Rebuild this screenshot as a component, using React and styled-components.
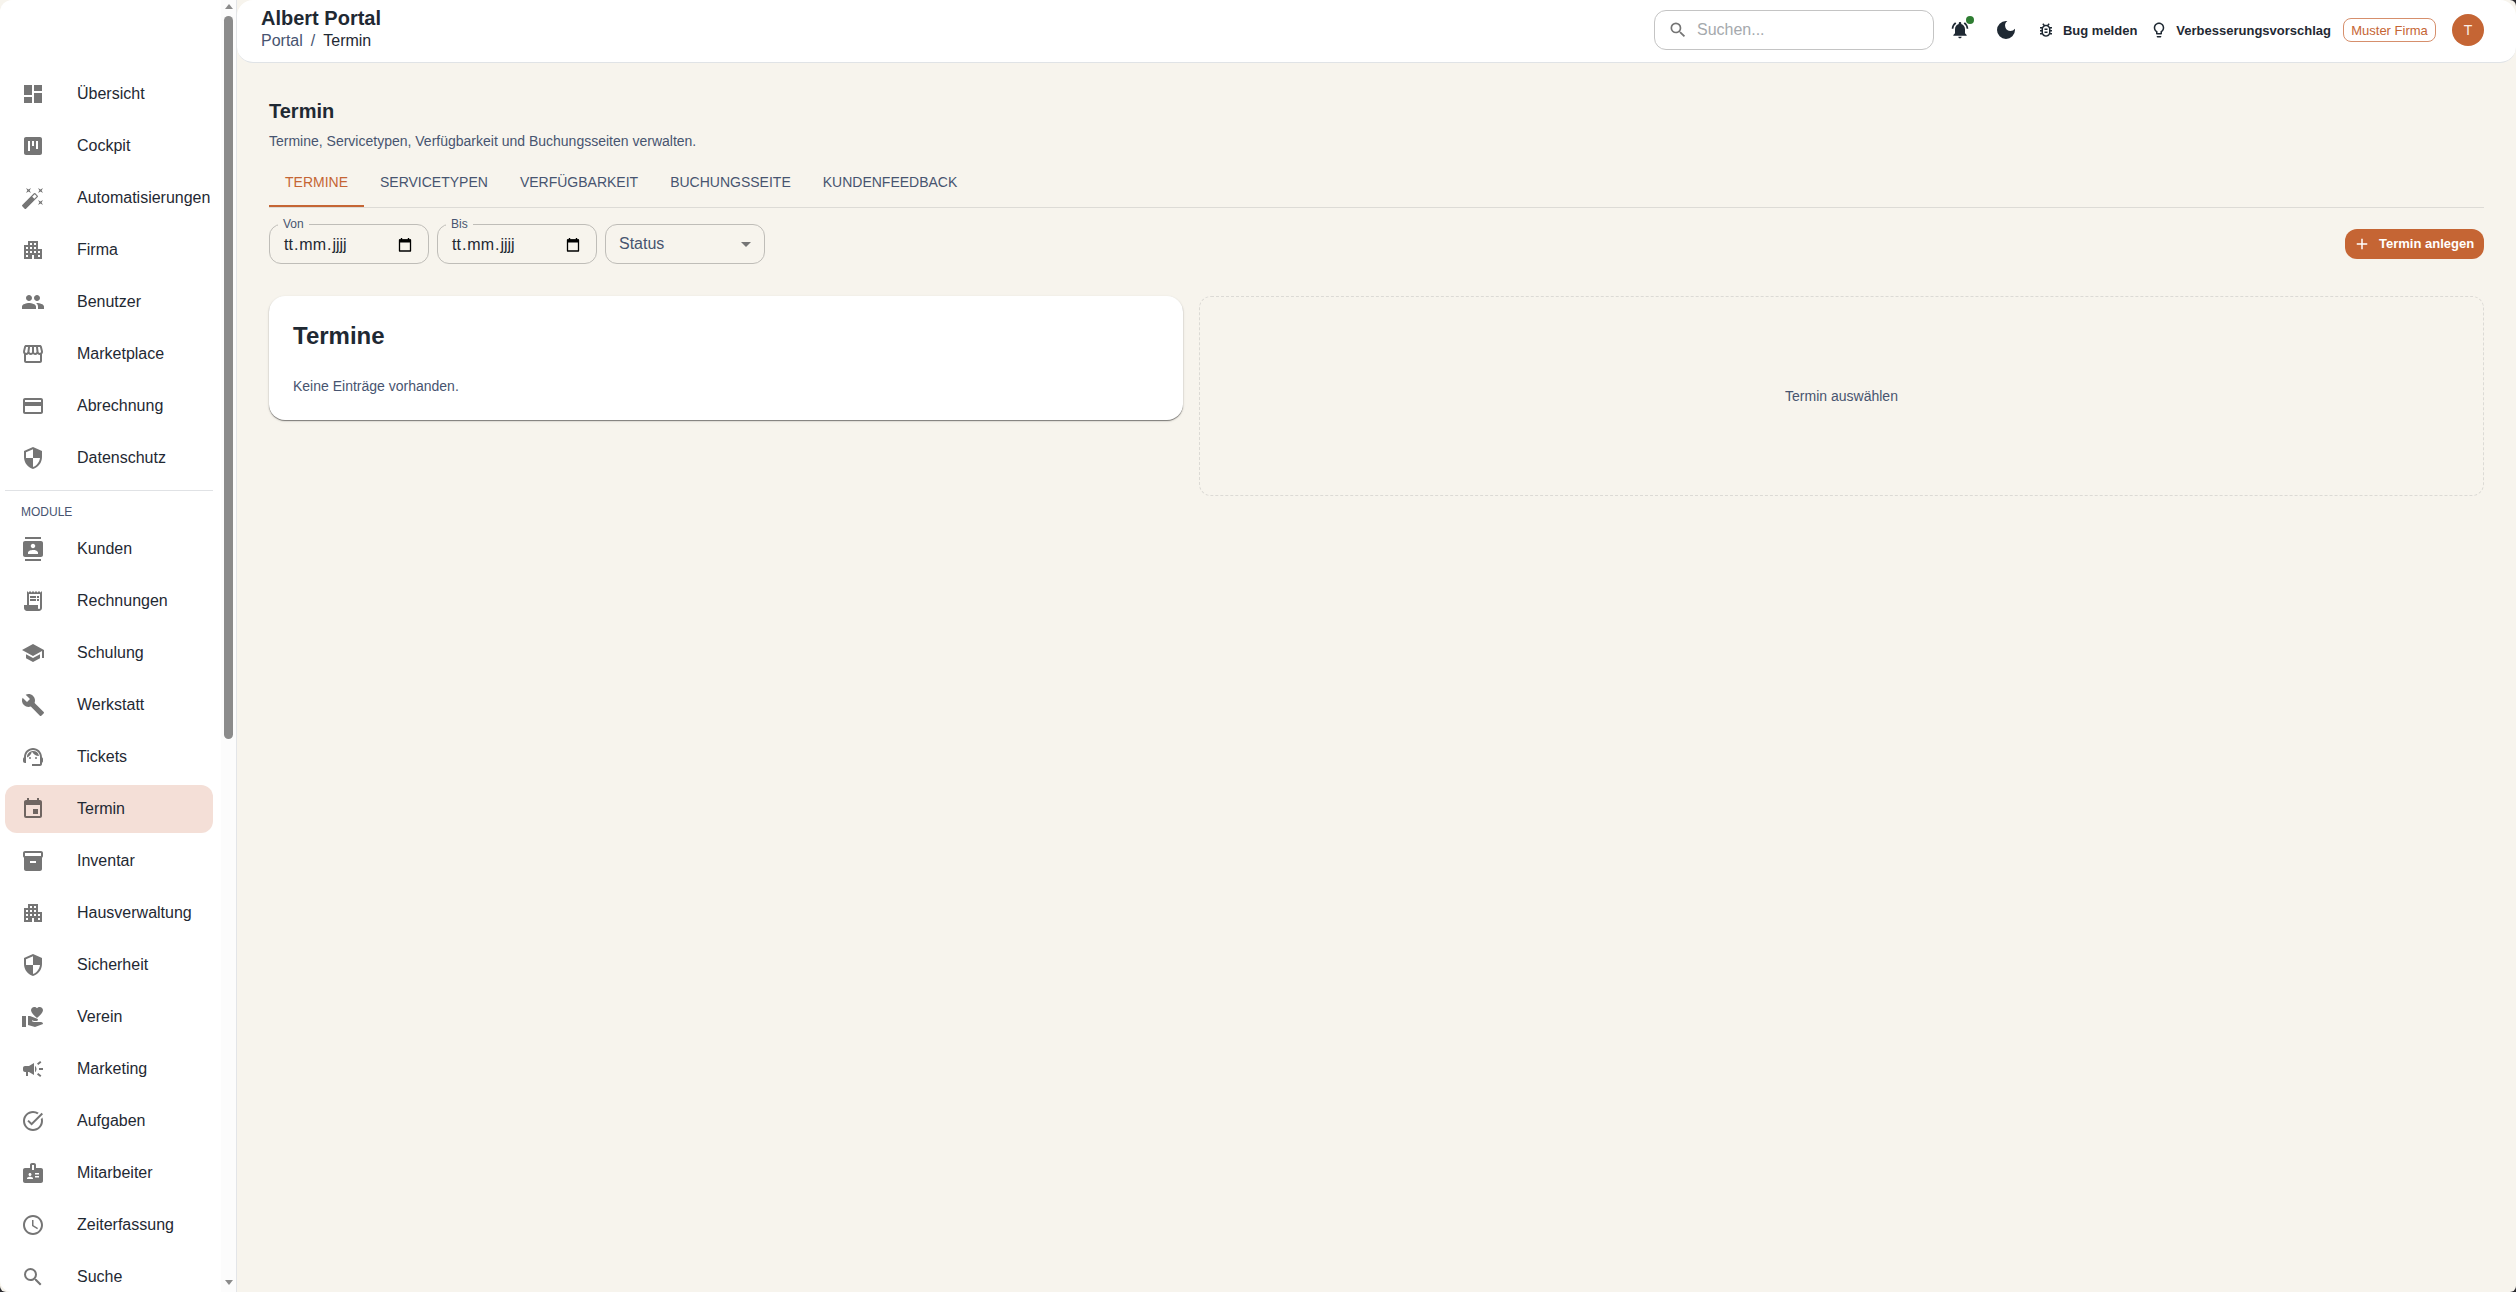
import React from "react";
import styled, { createGlobalStyle } from "styled-components";
import {
  MdDashboard, MdAutoFixHigh, MdPeople, MdSecurity, MdContacts,
  MdReceiptLong, MdSchool, MdBuild, MdSupportAgent, MdEvent, MdInventory2,
  MdVolunteerActivism, MdCampaign, MdTaskAlt, MdBadge, MdSchedule, MdSearch,
  MdNotificationsActive, MdAdd, MdArrowDropDown, MdApartment,
  MdOutlineStorefront, MdCreditCard, MdOutlineBugReport, MdLightbulbOutline,
} from "react-icons/md";

const ink = "#1f2933";
const slate = "#475470";
const accent = "#c56534";
const cream = "#f7f4ed";

const Global = createGlobalStyle`
  * { box-sizing: border-box; }
  html, body { margin: 0; height: 100%; }
  body { background: #2b2b30; overflow: hidden; }
  body, input, button { font-family: "Liberation Sans", Arial, sans-serif; }
`;

const Shell = styled.div`
  display: flex;
  width: 2516px;
  height: 1292px;
  background: ${cream};
  border-radius: 0 6px 6px 6px;
  overflow: hidden;
  color: ${ink};
`;

const Sidebar = styled.aside`
  display: flex;
  flex: none;
  width: 237px;
  height: 100%;
  background: #fff;
  border-right: 1px solid #e3e5e8;
  border-radius: 12px 0 0 12px;
  overflow: hidden;
`;
const NavArea = styled.nav`
  width: 221px;
  padding: 70px 8px 0 5px;
  overflow: hidden;
`;
const NavList = styled.ul`
  display: flex;
  flex-direction: column;
  gap: 4px;
  margin: 0;
  padding: 0;
  list-style: none;
`;
const NavItem = styled.li`
  display: flex;
  flex: none;
  align-items: center;
  height: 48px;
  padding-left: 16px;
  border-radius: 12px;
  background: ${(p) => (p.$active ? "#f4dfd7" : "transparent")};
  font-size: 16px;
  line-height: 24px;
  white-space: nowrap;
  svg {
    flex: none;
    width: 24px;
    height: 24px;
    margin-right: 32px;
    color: ${(p) => (p.$active ? "#6f6561" : "#757575")};
  }
`;
const Divider = styled.hr`
  height: 1px;
  margin: 8px 0 0;
  border: 0;
  background: #e0e2e5;
`;
const NavHeading = styled.div`
  height: 34px;
  padding: 6px 16px 0;
  font-size: 12px;
  line-height: 30px;
  color: ${slate};
`;
const ScrollTrack = styled.div`
  display: flex;
  flex-direction: column;
  align-items: center;
  width: 15px;
  height: 100%;
  background: #fcfcfc;
`;
const ScrollArrow = styled.span`
  width: 0;
  height: 0;
  border: 4.5px solid transparent;
  border-top-width: ${(p) => (p.$up ? "0" : "5px")};
  border-bottom-width: ${(p) => (p.$up ? "5px" : "0")};
  border-${(p) => (p.$up ? "bottom" : "top")}-color: #8b8b8b;
  margin: ${(p) => (p.$up ? "4px 0 7px" : "auto 0 7px")};
`;
const ScrollThumb = styled.div`
  width: 9px;
  height: 723px;
  border-radius: 5px;
  background: #8b8b8b;
`;

const Main = styled.div`
  display: flex;
  flex: 1;
  flex-direction: column;
  min-width: 0;
`;
const TopBar = styled.header`
  display: flex;
  align-items: center;
  height: 63px;
  padding: 0 32px 2px 24px;
  background: #fff;
  border-bottom: 1px solid #e0e3e6;
  border-radius: 16px;
`;
const Brand = styled.div`
  margin-right: auto;
  padding-bottom: 2px;
`;
const BrandName = styled.div`
  font-size: 20px;
  font-weight: 700;
  line-height: 23px;
`;
const Crumbs = styled.div`
  display: flex;
  gap: 8px;
  font-size: 16px;
  line-height: 22px;
  color: ${slate};
  strong { font-weight: 400; color: ${ink}; }
`;
const SearchBox = styled.label`
  display: flex;
  align-items: center;
  width: 280px;
  height: 40px;
  padding-left: 13px;
  border: 1px solid #c4c4c4;
  border-radius: 12px;
  svg { width: 20px; height: 20px; color: #757575; }
  input {
    flex: 1;
    min-width: 0;
    margin-left: 9px;
    padding: 0;
    border: 0;
    outline: 0;
    background: none;
    font-size: 16px;
  }
  input::placeholder { color: #a5a9ad; opacity: 1; }
`;
const IconButton = styled.button`
  position: relative;
  display: flex;
  width: ${(p) => p.$size}px;
  height: ${(p) => p.$size}px;
  margin-left: ${(p) => p.$gap}px;
  padding: 0;
  border: 0;
  background: none;
  color: ${ink};
  svg { width: 100%; height: 100%; }
`;
const Dot = styled.span`
  position: absolute;
  top: -4px;
  right: -4px;
  width: 8px;
  height: 8px;
  border-radius: 50%;
  background: #2e7d32;
`;
const TextButton = styled.button`
  display: flex;
  align-items: center;
  gap: 8px;
  margin-left: ${(p) => p.$gap}px;
  padding: 0;
  border: 0;
  background: none;
  color: ${ink};
  font-size: 13px;
  font-weight: 700;
  white-space: nowrap;
  svg { width: 18px; height: 18px; }
`;
const Chip = styled.span`
  display: flex;
  align-items: center;
  justify-content: center;
  width: 93px;
  height: 24px;
  margin-left: 12px;
  border: 1px solid #d68f6c;
  border-radius: 8px;
  color: ${accent};
  font-size: 13px;
`;
const Avatar = styled.span`
  display: flex;
  align-items: center;
  justify-content: center;
  width: 32px;
  height: 32px;
  margin-left: 16px;
  border-radius: 50%;
  background: ${accent};
  color: #fbeee7;
  font-size: 14px;
`;

const Content = styled.main`
  display: flex;
  flex-direction: column;
  padding: 34px 32px 0;
`;
const Title = styled.h1`
  margin: 0;
  font-size: 20px;
  line-height: 28px;
`;
const Subtitle = styled.p`
  margin: 6px 0 0;
  font-size: 14px;
  line-height: 20px;
  color: ${slate};
`;
const Tabs = styled.div`
  display: flex;
  height: 57px;
  border-bottom: 1px solid #dddbd6;
`;
const Tab = styled.div`
  height: 56px;
  padding: 0 16px;
  border-bottom: 2px solid ${(p) => (p.$active ? accent : "transparent")};
  color: ${(p) => (p.$active ? accent : slate)};
  font-size: 14px;
  line-height: 62px;
`;
const Filters = styled.div`
  display: flex;
  align-items: center;
  gap: 8px;
  margin-top: 9px;
`;
const Field = styled.fieldset`
  display: flex;
  align-items: center;
  justify-content: space-between;
  width: 160px;
  height: ${(p) => (p.$labelled ? 47 : 40)}px;
  margin: ${(p) => (p.$labelled ? "0" : "7px 0 0")};
  min-width: 0;
  padding: ${(p) => (p.$labelled ? "0 16px 5px 13px" : "0 6px 0 13px")};
  border: 1px solid #bfbdb8;
  border-radius: 12px;
  font-size: 16px;
  color: ${(p) => (p.$labelled ? ink : slate)};
  legend {
    height: 14px;
    margin-left: -5px;
    padding: 0 5px;
    color: ${slate};
    font-size: 12px;
    line-height: 14px;
  }
  svg { color: #757575; width: 24px; height: 24px; }
`;
const DateValue = styled.div`
  display: flex;
  align-items: center;
  justify-content: space-between;
  width: 100%;
  height: 26px;
  svg { width: 14px; height: 16px; color: #000; }
`;
const DateParts = styled.span`
  display: flex;
  gap: 1px;
  padding-left: 1px;
`;
const AddButton = styled.button`
  display: flex;
  align-items: center;
  gap: 8px;
  width: 139px;
  height: 30px;
  margin: 6px 0 0 auto;
  padding: 0 0 0 8px;
  border: 0;
  border-radius: 12px;
  background: ${accent};
  color: #fff;
  font-size: 13px;
  font-weight: 700;
  white-space: nowrap;
  svg { width: 18px; height: 18px; }
`;
const Panels = styled.div`
  display: grid;
  grid-template-columns: 914px 1285px;
  align-items: start;
  gap: 16px;
  margin-top: 32px;
`;
const Card = styled.section`
  height: 124px;
  padding: 24px;
  border-radius: 16px;
  background: #fff;
  box-shadow: 0 1px 1px rgba(0, 0, 0, 0.45), 0 1px 3px rgba(0, 0, 0, 0.12);
  h2 { margin: 0; font-size: 24px; line-height: 32px; }
  p { margin: 24px 0 0; font-size: 14px; line-height: 20px; color: ${slate}; }
`;
const EmptyPanel = styled.section`
  display: flex;
  align-items: center;
  justify-content: center;
  height: 200px;
  border: 1px dashed #dcdad5;
  border-radius: 12px;
  font-size: 14px;
  color: ${slate};
`;

const CockpitIcon = () => (
  <svg viewBox="0 0 24 24" fill="currentColor">
    <path fillRule="evenodd" d="M19 3H5c-1.100 0-2 .9-2 2v14c0 1.100.9 2 2 2h14c1.100 0 2-.9 2-2V5c0-1.100-.9-2-2-2zM9 17H7V7h2v10zm4-5h-2V7h2v5zm4 3h-2V7h2v8z" />
  </svg>
);
const MoonIcon = () => (
  <svg viewBox="0 0 24 24" fill="currentColor">
    <path d="M12 3a9 9 0 1 0 9 9c0-.46-.04-.92-.1-1.360a5.389 5.389 0 0 1-4.400 2.260 5.403 5.403 0 0 1-3.140-9.800c-.44-.06-.9-.1-1.360-.1z" />
  </svg>
);
const CalendarIcon = () => (
  <svg viewBox="0 0 14 16" fill="none" stroke="currentColor">
    <path d="M1.500 3h11v11h-11z" strokeWidth="1.300" strokeLinejoin="round" />
    <path d="M1 4h12" strokeWidth="3" />
    <path d="M3.500 1v2M10.500 1v2" strokeWidth="1.400" />
  </svg>
);

const mainNav = [
  ["Übersicht", MdDashboard],
  ["Cockpit", CockpitIcon],
  ["Automatisierungen", MdAutoFixHigh],
  ["Firma", MdApartment],
  ["Benutzer", MdPeople],
  ["Marketplace", MdOutlineStorefront],
  ["Abrechnung", MdCreditCard],
  ["Datenschutz", MdSecurity],
];
const moduleNav = [
  ["Kunden", MdContacts],
  ["Rechnungen", MdReceiptLong],
  ["Schulung", MdSchool],
  ["Werkstatt", MdBuild],
  ["Tickets", MdSupportAgent],
  ["Termin", MdEvent],
  ["Inventar", MdInventory2],
  ["Hausverwaltung", MdApartment],
  ["Sicherheit", MdSecurity],
  ["Verein", MdVolunteerActivism],
  ["Marketing", MdCampaign],
  ["Aufgaben", MdTaskAlt],
  ["Mitarbeiter", MdBadge],
  ["Zeiterfassung", MdSchedule],
  ["Suche", MdSearch],
];
const tabs = ["TERMINE", "SERVICETYPEN", "VERFÜGBARKEIT", "BUCHUNGSSEITE", "KUNDENFEEDBACK"];

const Nav = ({ items, active }) => (
  <NavList>
    {items.map(([label, Icon]) => (
      <NavItem key={label} $active={label === active}>
        <Icon />
        {label}
      </NavItem>
    ))}
  </NavList>
);

const DateField = ({ label }) => (
  <Field $labelled>
    <legend>{label}</legend>
    <DateValue>
      <DateParts>
        <span>tt</span>
        <span>.</span>
        <span>mm</span>
        <span>.</span>
        <span>jjjj</span>
      </DateParts>
      <CalendarIcon />
    </DateValue>
  </Field>
);

export default function App() {
  return (
    <>
      <Global />
      <Shell>
        <Sidebar>
          <NavArea>
            <Nav items={mainNav} />
            <Divider />
            <NavHeading>MODULE</NavHeading>
            <Nav items={moduleNav} active="Termin" />
          </NavArea>
          <ScrollTrack>
            <ScrollArrow $up />
            <ScrollThumb />
            <ScrollArrow />
          </ScrollTrack>
        </Sidebar>
        <Main>
          <TopBar>
            <Brand>
              <BrandName>Albert Portal</BrandName>
              <Crumbs>
                <span>Portal</span>
                <span>/</span>
                <strong>Termin</strong>
              </Crumbs>
            </Brand>
            <SearchBox>
              <MdSearch />
              <input placeholder="Suchen..." />
            </SearchBox>
            <IconButton $gap={16} $size={20}>
              <MdNotificationsActive />
              <Dot />
            </IconButton>
            <IconButton $gap={24} $size={24}>
              <MoonIcon />
            </IconButton>
            <TextButton $gap={19}>
              <MdOutlineBugReport />
              Bug melden
            </TextButton>
            <TextButton $gap={13}>
              <MdLightbulbOutline />
              Verbesserungsvorschlag
            </TextButton>
            <Chip>Muster Firma</Chip>
            <Avatar>T</Avatar>
          </TopBar>
          <Content>
            <Title>Termin</Title>
            <Subtitle>Termine, Servicetypen, Verfügbarkeit und Buchungsseiten verwalten.</Subtitle>
            <Tabs>
              {tabs.map((t, i) => (
                <Tab key={t} $active={i === 0}>{t}</Tab>
              ))}
            </Tabs>
            <Filters>
              <DateField label="Von" />
              <DateField label="Bis" />
              <Field as="div">
                Status
                <MdArrowDropDown />
              </Field>
              <AddButton>
                <MdAdd />
                Termin anlegen
              </AddButton>
            </Filters>
            <Panels>
              <Card>
                <h2>Termine</h2>
                <p>Keine Einträge vorhanden.</p>
              </Card>
              <EmptyPanel>Termin auswählen</EmptyPanel>
            </Panels>
          </Content>
        </Main>
      </Shell>
    </>
  );
}
